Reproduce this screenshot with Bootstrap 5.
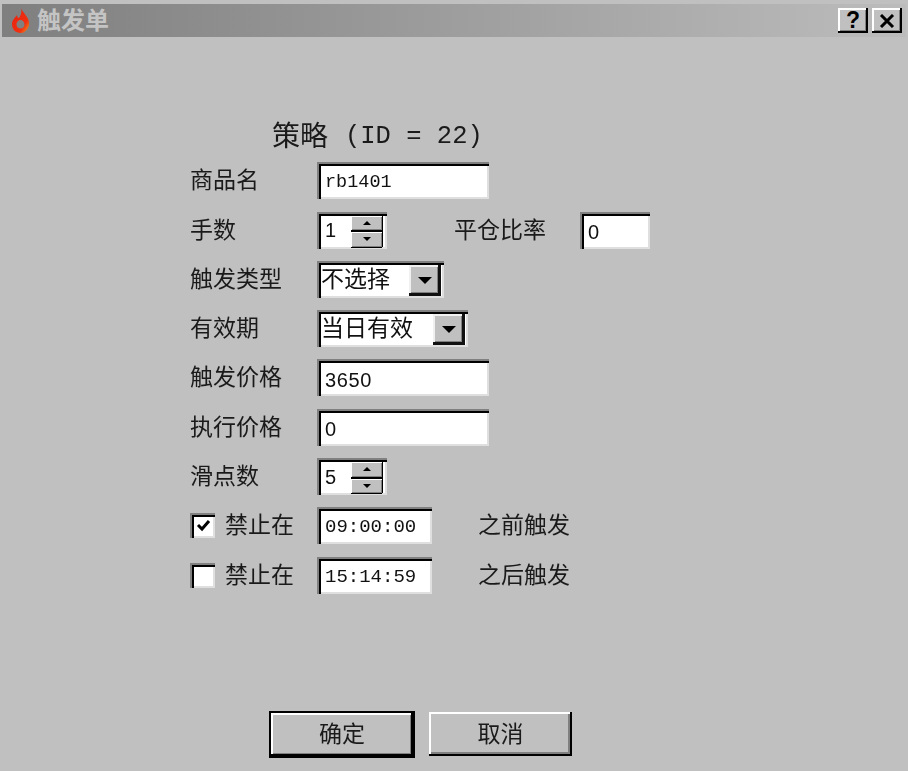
<!DOCTYPE html>
<html lang="zh-CN">
<head>
<meta charset="utf-8">
<title>触发单</title>
<link href="https://cdn.jsdelivr.net/npm/bootstrap@5.3.0/dist/css/bootstrap.min.css" rel="stylesheet">
<style>
html,body{height:100%;}
body{background:#c0c0c0;color:#1a1a1a;font-family:"Liberation Sans","Noto Sans CJK SC",sans-serif;font-size:23px;line-height:1;overflow:hidden;}
.dlg{height:771px;filter:blur(.45px);}
.tbar{height:33px;margin:4px 2px 0;flex:none;background:linear-gradient(90deg,#7f7f7f 0%,#bcbcbc 100%);color:#c4c4c4;font-size:24px;font-weight:700;padding-left:9px;padding-right:4px;}
.tbar svg.flame{margin-right:7px;}
.cap-btn{width:30px;height:25px;background:#c0c0c0;border:0;padding:0;color:#000;font-weight:700;font-size:23px;line-height:25px;box-shadow:inset -2px -2px 0 #000,inset 2px 2px 0 #fff,inset -3px -3px 0 #808080;}
.cap-btn svg{display:block;margin:auto;}
.formwrap{margin-left:190px;margin-top:74px;gap:12.3px;}
.frow{height:37px;}
.frow-head{height:44px;margin-top:4px;margin-bottom:-9px;padding-left:82px;font-size:28px;}
.head-mono{font-family:"Liberation Mono",monospace;font-size:25.500px;margin-left:17px;}
.lbl{width:127px;flex:none;}
.sunk{height:37px;background:#fff;color:#111;font-size:20px;letter-spacing:.6px;box-shadow:inset 2px 2px 0 #808080,inset 4px 4px 0 #000,inset -2px -2px 0 #dfdfdf;padding:4px 4px 0 8px;flex:none;}
.w-name{width:172px;}
.w-spin{width:70px;}
.w-ratio{width:70px;}
.w-time{width:115px;letter-spacing:0;font-family:"Liberation Mono",monospace;font-size:19px;}
.w-cb1{width:127px;font-size:23px;letter-spacing:0;}
.w-cb2{width:151px;font-size:23px;letter-spacing:0;}
.mono{font-family:"Liberation Mono",monospace;font-size:18.500px;letter-spacing:0;}
.spin{width:31px;margin:4px 5px 2px auto;height:31px;background:#000;gap:2px;box-shadow:1px 0 0 #000,0 1px 0 #000;}
.spin-b{flex:1;background:#c0c0c0;box-shadow:inset 1px 1px 0 #fff,inset -1px -1px 0 #808080;}
.combo-b{width:32px;height:31px;margin:4px 3px 2px auto;background:#c0c0c0;box-shadow:inset -3px -3px 0 #111,inset 2px 2px 0 #f0f0f0,inset -4px -4px 0 #808080;}
.tri-u,.tri-d{width:0;height:0;border-left:4px solid transparent;border-right:4px solid transparent;}
.tri-u{border-bottom:4px solid #000;}
.tri-d{border-top:4px solid #000;}
.tri-big{border-left-width:7px;border-right-width:7px;border-top-width:7px;}
.ratio-lbl{margin-left:67px;width:126px;flex:none;}
.cbx{width:25px;height:25px;flex:none;background:#fff;box-shadow:inset 2px 2px 0 #808080,inset 4px 4px 0 #000,inset -2px -2px 0 #dfdfdf;margin:0 10px 0 0;}
.cbx-lbl{width:92px;flex:none;}
.after{margin-left:46px;}
.btnrow{margin-left:269px;margin-top:auto;margin-bottom:13px;gap:14px;}
.wbtn{width:146px;height:47px;padding:0;border:0;border-radius:0;background:#c0c0c0;color:#1a1a1a;font-size:23px;box-shadow:inset -2px -2px 0 #000,inset 2px 2px 0 #fff,inset -4px -4px 0 #808080;}
.wbtn-def{box-shadow:inset 0 0 0 2px #000,inset -4px -4px 0 #000,inset 4px 4px 0 #fff,inset -5px -5px 0 #808080;}
.wbtn-alt{width:143px;height:44px;margin-top:1px;}
</style>
</head>
<body>
<div class="dlg d-flex flex-column">
  <div class="tbar d-flex align-items-center">
    <svg class="flame" width="19" height="25" viewBox="0 0 19 25">
      <defs><linearGradient id="fg" x1="0" y1="0" x2="1" y2="1"><stop offset="0" stop-color="#e82010"/><stop offset=".7" stop-color="#f03010"/><stop offset="1" stop-color="#f0a020"/></linearGradient></defs>
      <path fill="url(#fg)" fill-rule="evenodd" d="M10 0C11 4 17 8 18 14C19 20 14 25 10 25C4 25 1 21 1 16C1 12 4 10 6 7C6 9 7 10 8 10C10 7 11 4 10 0ZM9.500 12C7 12 5.500 14.500 5.500 16.500C5.500 19 7.500 20.500 9.500 20.500C11.500 20.500 13.500 19 13.500 16.500C13.500 14.500 12 12 9.500 12Z"/>
    </svg>
    <span>触发单</span>
    <div class="ms-auto d-flex gap-1">
      <button class="cap-btn" type="button">?</button>
      <button class="cap-btn" type="button"><svg width="16" height="14" viewBox="0 0 16 14"><path d="M2 1L14 13M14 1L2 13" stroke="#000" stroke-width="3"/></svg></button>
    </div>
  </div>

  <div class="formwrap d-flex flex-column">
    <div class="frow-head d-flex align-items-center">策略<span class="head-mono">(ID = 22)</span></div>
    <div class="frow d-flex align-items-center"><div class="lbl">商品名</div><div class="sunk w-name mono d-flex align-items-center">rb1401</div></div>
    <div class="frow d-flex align-items-center">
      <div class="lbl">手数</div>
      <div class="sunk w-spin d-flex align-items-center p-0 ps-2"><span>1</span>
        <div class="spin d-flex flex-column"><div class="spin-b d-flex align-items-center justify-content-center"><i class="tri-u"></i></div><div class="spin-b d-flex align-items-center justify-content-center"><i class="tri-d"></i></div></div>
      </div>
      <div class="ratio-lbl">平仓比率</div>
      <div class="sunk w-ratio d-flex align-items-center">0</div>
    </div>
    <div class="frow d-flex align-items-center">
      <div class="lbl">触发类型</div>
      <div class="sunk w-cb1 d-flex align-items-center p-0 ps-1"><span>不选择</span><div class="combo-b d-flex align-items-center justify-content-center"><i class="tri-d tri-big"></i></div></div>
    </div>
    <div class="frow d-flex align-items-center">
      <div class="lbl">有效期</div>
      <div class="sunk w-cb2 d-flex align-items-center p-0 ps-1"><span>当日有效</span><div class="combo-b d-flex align-items-center justify-content-center"><i class="tri-d tri-big"></i></div></div>
    </div>
    <div class="frow d-flex align-items-center"><div class="lbl">触发价格</div><div class="sunk w-name d-flex align-items-center">3650</div></div>
    <div class="frow d-flex align-items-center"><div class="lbl">执行价格</div><div class="sunk w-name d-flex align-items-center">0</div></div>
    <div class="frow d-flex align-items-center">
      <div class="lbl">滑点数</div>
      <div class="sunk w-spin d-flex align-items-center p-0 ps-2"><span>5</span>
        <div class="spin d-flex flex-column"><div class="spin-b d-flex align-items-center justify-content-center"><i class="tri-u"></i></div><div class="spin-b d-flex align-items-center justify-content-center"><i class="tri-d"></i></div></div>
      </div>
    </div>
    <div class="frow d-flex align-items-center">
      <div class="cbx d-flex align-items-center justify-content-center"><svg width="17" height="15" viewBox="0 0 17 15"><path d="M4 7L8 11L15 3" fill="none" stroke="#000" stroke-width="3"/></svg></div>
      <div class="cbx-lbl">禁止在</div>
      <div class="sunk w-time d-flex align-items-center">09:00:00</div>
      <div class="after">之前触发</div>
    </div>
    <div class="frow d-flex align-items-center">
      <div class="cbx"></div>
      <div class="cbx-lbl">禁止在</div>
      <div class="sunk w-time d-flex align-items-center">15:14:59</div>
      <div class="after">之后触发</div>
    </div>
  </div>

  <div class="btnrow d-flex align-items-start">
    <button class="btn wbtn wbtn-def" type="button">确定</button>
    <button class="btn wbtn wbtn-alt" type="button">取消</button>
  </div>
</div>
</body>
</html>
